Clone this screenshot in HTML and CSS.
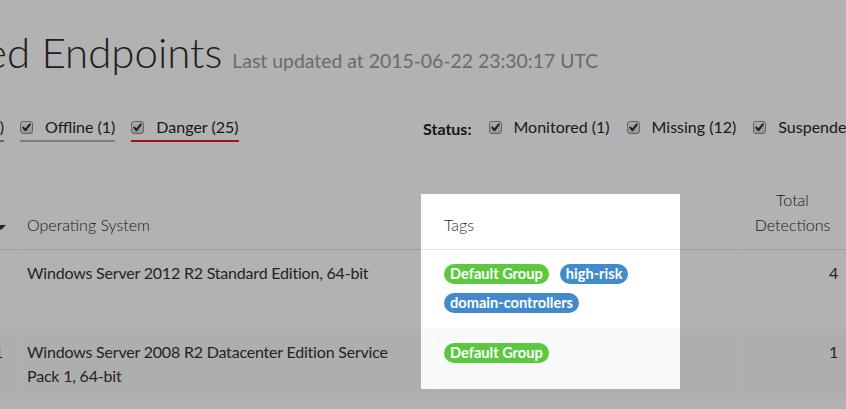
FILE: index.html
```html
<!DOCTYPE html>
<html lang="en">
<head>
<meta charset="utf-8">
<title>Managed Endpoints</title>
<link rel="stylesheet" href="styles.css">
</head>
<body>
<div class="page">
  <h1 class="title"><span class="title-main">ed Endpoints</span><small class="updated">Last updated at 2015-06-22 23:30:17 UTC</small></h1>

  <div class="filters">
    <div class="filter-group">
      <span class="filter partial online"><span>(0)</span></span>
      <label class="filter offline"><span class="cb"><svg viewBox="0 0 13 13" width="13" height="13"><path d="M3.3 6.6 L5.4 9.2 L9.8 3.4" fill="none" stroke="#2a2a2a" stroke-width="2" stroke-linecap="round" stroke-linejoin="round"/></svg></span><span>Offline (1)</span></label>
      <label class="filter danger"><span class="cb"><svg viewBox="0 0 13 13" width="13" height="13"><path d="M3.3 6.6 L5.4 9.2 L9.8 3.4" fill="none" stroke="#2a2a2a" stroke-width="2" stroke-linecap="round" stroke-linejoin="round"/></svg></span><span>Danger (25)</span></label>
    </div>
    <div class="filter-group status">
      <strong class="status-label">Status:</strong>
      <label class="filter plain"><span class="cb"><svg viewBox="0 0 13 13" width="13" height="13"><path d="M3.3 6.6 L5.4 9.2 L9.8 3.4" fill="none" stroke="#2a2a2a" stroke-width="2" stroke-linecap="round" stroke-linejoin="round"/></svg></span><span>Monitored (1)</span></label>
      <label class="filter plain"><span class="cb"><svg viewBox="0 0 13 13" width="13" height="13"><path d="M3.3 6.6 L5.4 9.2 L9.8 3.4" fill="none" stroke="#2a2a2a" stroke-width="2" stroke-linecap="round" stroke-linejoin="round"/></svg></span><span>Missing (12)</span></label>
      <label class="filter plain"><span class="cb"><svg viewBox="0 0 13 13" width="13" height="13"><path d="M3.3 6.6 L5.4 9.2 L9.8 3.4" fill="none" stroke="#2a2a2a" stroke-width="2" stroke-linecap="round" stroke-linejoin="round"/></svg></span><span>Suspended (0)</span></label>
    </div>
  </div>

  <table class="endpoints">
    <thead>
      <tr>
        <th class="idx"><span class="caret"></span></th>
        <th class="os">Operating System</th>
        <th class="tags-col">Tags</th>
        <th class="det">Total<br>Detections</th>
      </tr>
    </thead>
    <tbody>
      <tr>
        <td class="idx"></td>
        <td class="os">Windows Server 2012 R2 Standard Edition, 64-bit</td>
        <td class="tags-col">
          <div class="tags">
            <span class="tag tag-green">Default Group</span>
            <span class="tag tag-blue">high-risk</span>
            <span class="tag tag-blue">domain-controllers</span>
          </div>
        </td>
        <td class="det">4</td>
      </tr>
      <tr class="striped">
        <td class="idx">1</td>
        <td class="os">Windows Server 2008 R2 Datacenter Edition Service Pack 1, 64-bit</td>
        <td class="tags-col">
          <div class="tags">
            <span class="tag tag-green">Default Group</span>
          </div>
        </td>
        <td class="det">1</td>
      </tr>
    </tbody>
  </table>
</div>
<div class="spotlight" aria-hidden="true"></div>
</body>
</html>
```

FILE: styles.css
```css
html, body {
  margin: 0;
  padding: 0;
  background: #fff;
  overflow: hidden;
}

body {
  font-family: Lato, "Liberation Sans", sans-serif;
  font-size: 16px;
  font-weight: 400;
  color: #333;
  width: 846px;
  height: 409px;
}

.page {
  white-space: nowrap;
}

/* Title */
.title {
  margin: 26px 0 0;
  display: flex;
  align-items: baseline;
  font-weight: 300;
  font-size: 42px;
  line-height: 52px;
  color: #2b2b2b;
}

.title-main {
  margin-left: -15px;
}

.updated {
  margin-left: 10px;
  font-size: 19.4px;
  font-weight: 400;
  color: #999;
}

/* Filters */
.filters {
  margin-top: 28px;
  display: grid;
  grid-template-columns: 423px auto;
  align-items: start;
}

.filter-group {
  display: flex;
  align-items: center;
  gap: 16px;
}

.filter {
  display: inline-flex;
  align-items: center;
  gap: 12px;
  line-height: 24px;
  padding-bottom: 1px;
  border-bottom: 2px solid transparent;
  color: #262626;
  font-weight: 400;
}

.filter.partial {
  width: 4px;
  overflow: hidden;
  justify-content: flex-end;
}

.online { border-bottom-color: #7fb24a; }
.offline { border-bottom-color: #b4b4b4; }
.danger { border-bottom-color: #e21d2c; }

.status {
  gap: 17px;
}

.status-label {
  font-weight: 700;
  color: #222;
}

.cb {
  box-sizing: border-box;
  width: 13px;
  height: 13px;
  border: 1px solid #8e8e8e;
  border-radius: 3px;
  background: linear-gradient(#f6f6f6, #d4d4d4);
  display: inline-flex;
  align-items: center;
  justify-content: center;
  overflow: hidden;
}

.cb svg {
  display: block;
  flex: none;
}

/* Table */
.endpoints {
  margin-top: 39px;
  margin-left: -44px;
  width: 892px;
  table-layout: fixed;
  border-collapse: separate;
  border-spacing: 0;
}

.endpoints th,
.endpoints td {
  box-sizing: border-box;
  padding: 11px 10px;
  line-height: 24px;
  text-align: left;
  vertical-align: top;
  white-space: normal;
  font-weight: 400;
  letter-spacing: -0.2px;
  border-left: 1px solid #fff;
}

.endpoints th {
  padding: 6px 10px 12px;
  vertical-align: bottom;
  font-weight: 300;
  letter-spacing: 0;
  line-height: 25px;
  color: #2b2b2b;
  border-bottom: 1px solid #e6e6e6;
}

.endpoints .idx {
  width: 60px;
  border-left: none;
  text-align: right;
  padding-right: 13px;
}

.endpoints .os { width: 417px; }
.endpoints .tags-col { width: 303px; }
.endpoints .det {
  width: 112px;
  text-align: right;
}

.endpoints th.det {
  text-align: center;
}

.caret {
  display: inline-block;
  width: 0;
  height: 0;
  border-top: 5px solid #333;
  border-left: 5px solid transparent;
  border-right: 5px solid transparent;
  margin-right: -3px;
  vertical-align: middle;
}

.striped td {
  background: #f9f9f9;
}

.tags {
  display: flex;
  flex-wrap: wrap;
  gap: 9px 11px;
  padding: 3px 0 5px;
}

.tag {
  display: inline-block;
  height: 20px;
  line-height: 20px;
  padding: 0 6px;
  border-radius: 10px;
  font-size: 14.6px;
  font-weight: 700;
  letter-spacing: 0;
  color: #fff;
}

.tag-green { background: #5bc840; }
.tag-blue { background: #428bca; }

/* Tour spotlight overlay */
.spotlight {
  position: fixed;
  left: 421px;
  top: 194px;
  width: 259px;
  height: 195px;
  box-shadow: 0 0 0 2000px rgba(0, 0, 0, 0.3);
  pointer-events: none;
}
```
